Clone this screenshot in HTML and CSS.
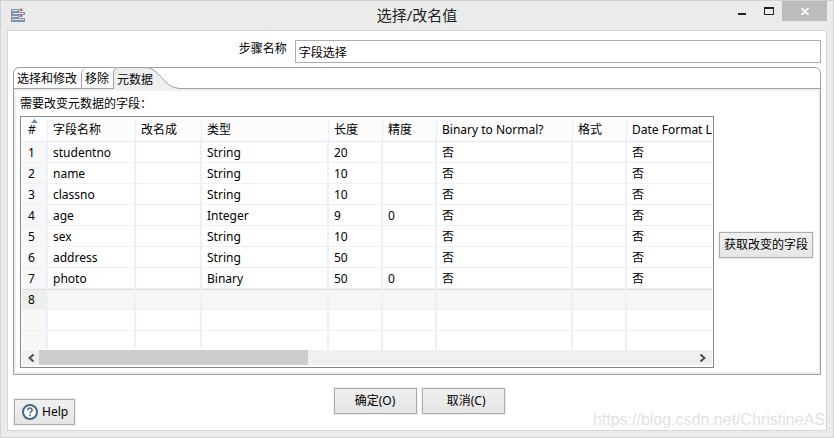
FILE: index.html
```html
<!DOCTYPE html>
<html lang="zh-CN">
<head>
  <meta charset="UTF-8" />
  <meta name="viewport" content="width=device-width, initial-scale=1" />
  <title>选择/改名值</title>
  <link rel="stylesheet" href="styles.css">
</head>
<body>
  <div class="window">
    <header class="title-bar">
      <svg class="app-icon" width="14" height="14" viewBox="0 0 14 14" shape-rendering="crispEdges" aria-hidden="true">
        <path fill="#7b96a8" d="M0 1h8v4H0zM0 4h14v3H0zM0 7h8v3H0zM0 10h14v4H0z"/>
        <path fill="#d9e2e8" d="M1 2h6v1H1zM2 5h11v1H2zM1 8h6v1H1zM1 11h12v1H1z"/>
        <path fill="#e8b6bf" d="M8 0h4v3H8zM8 7h4v2H8z"/>
        <path fill="#e9455c" d="M9 1h2v2H9zM9 7h2v2H9z"/>
      </svg>
      <h1 class="title">选择/改名值</h1>
      <div class="window-controls">
        <button class="control" type="button" aria-label="最小化">
          <svg width="8" height="10" viewBox="0 0 8 10"><path fill="#222" d="M0 7h8v2H0z"/></svg>
        </button>
        <button class="control" type="button" aria-label="最大化">
          <svg width="10" height="8" viewBox="0 0 10 8"><path fill="#222" fill-rule="evenodd" d="M0 0h10v8H0zM1 2v5h8V2z"/></svg>
        </button>
        <button class="control close" type="button" aria-label="关闭">
          <svg width="8" height="7" viewBox="0 0 8 7"><path stroke="#fff" stroke-width="1.6" d="M0.5 0 7.5 7M7.5 0 0.5 7"/></svg>
        </button>
      </div>
    </header>

    <main class="client">
      <div class="step-row">
        <label for="step-name">步骤名称</label>
        <input class="step-input" id="step-name" type="text" value="字段选择">
      </div>

      <section class="folder">
        <div class="tabs" role="tablist">
          <button class="tab" type="button" role="tab">选择和修改</button>
          <button class="tab" type="button" role="tab">移除</button>
          <button class="tab active" type="button" role="tab" aria-selected="true">
            <svg class="tab-shape" width="68" height="22" viewBox="0 0 68 22" aria-hidden="true">
              <path fill="#efefef" d="M0 22V6Q0 0 5 0H32C48 0 49 21 67 21V22z"/>
              <path fill="none" stroke="#a0a0a0" d="M0.5 22V6Q0.5 2 5 0.5H32C48 0.5 49 21 67 21.5"/>
            </svg>
            <span class="tab-text">元数据</span>
          </button>
        </div>

        <div class="panel" role="tabpanel">
          <p class="caption">需要改变元数据的字段：</p>
          <div class="panel-body">
            <div class="grid-box">
              <div class="grid-view">
                <table class="grid">
                  <colgroup>
                    <col class="col-index"><col class="col-name"><col class="col-rename"><col class="col-type">
                    <col class="col-short"><col class="col-short"><col class="col-binary"><col class="col-short"><col>
                  </colgroup>
                  <thead>
                    <tr>
                      <th class="sorted">#<svg class="sort-mark" width="7" height="4" viewBox="0 0 7 4" aria-hidden="true"><path fill="#5b9ab8" d="M0 4 3.5 0 7 4z"/></svg></th>
                      <th>字段名称</th><th>改名成</th><th>类型</th><th>长度</th><th>精度</th>
                      <th>Binary to Normal?</th><th>格式</th><th>Date Format L</th>
                    </tr>
                  </thead>
                  <tbody>
                    <tr><td>1</td><td>studentno</td><td></td><td>String</td><td>20</td><td></td><td>否</td><td></td><td>否</td></tr>
                    <tr><td>2</td><td>name</td><td></td><td>String</td><td>10</td><td></td><td>否</td><td></td><td>否</td></tr>
                    <tr><td>3</td><td>classno</td><td></td><td>String</td><td>10</td><td></td><td>否</td><td></td><td>否</td></tr>
                    <tr><td>4</td><td>age</td><td></td><td>Integer</td><td>9</td><td>0</td><td>否</td><td></td><td>否</td></tr>
                    <tr><td>5</td><td>sex</td><td></td><td>String</td><td>10</td><td></td><td>否</td><td></td><td>否</td></tr>
                    <tr><td>6</td><td>address</td><td></td><td>String</td><td>50</td><td></td><td>否</td><td></td><td>否</td></tr>
                    <tr><td>7</td><td>photo</td><td></td><td>Binary</td><td>50</td><td>0</td><td>否</td><td></td><td>否</td></tr>
                    <tr class="current"><td>8</td><td></td><td></td><td></td><td></td><td></td><td></td><td></td><td></td></tr>
                    <tr><td></td><td></td><td></td><td></td><td></td><td></td><td></td><td></td><td></td></tr>
                    <tr><td></td><td></td><td></td><td></td><td></td><td></td><td></td><td></td><td></td></tr>
                  </tbody>
                </table>
              </div>
              <div class="scrollbar">
                <button class="scroll-arrow" type="button" aria-label="向左滚动">
                  <svg width="6" height="8" viewBox="0 0 6 8"><path fill="none" stroke="#505050" stroke-width="2" d="M5.5 0.5 1.5 4 5.5 7.5"/></svg>
                </button>
                <div class="scroll-track"><div class="scroll-thumb"></div></div>
                <button class="scroll-arrow" type="button" aria-label="向右滚动">
                  <svg width="6" height="8" viewBox="0 0 6 8"><path fill="none" stroke="#505050" stroke-width="2" d="M0.5 0.5 4.5 4 0.5 7.5"/></svg>
                </button>
              </div>
            </div>
            <button class="btn btn-fetch" type="button">获取改变的字段</button>
          </div>
        </div>
      </section>

      <footer class="footer">
        <button class="btn btn-help" type="button">
          <svg width="16" height="16" viewBox="0 0 16 16" aria-hidden="true">
            <circle cx="8" cy="8" r="7" fill="#fff" stroke="#44698a" stroke-width="2"/>
            <path fill="none" stroke="#44698a" stroke-width="1.5" d="M5.8 6.2C5.8 3.4 10.2 3.4 10.2 6.1 10.2 7.8 8 7.7 8 9.6"/>
            <path fill="#44698a" d="M7.2 10.6h1.6v1.6H7.2z"/>
          </svg>
          Help
        </button>
        <div class="actions">
          <button class="btn btn-action" type="button">确定(O)</button>
          <button class="btn btn-action" type="button">&nbsp;&nbsp;取消(C)</button>
        </div>
        <span class="watermark">https://blog.csdn.net/ChristineAS</span>
      </footer>
    </main>
  </div>
</body>
</html>
```

FILE: styles.css
```css
* {
  box-sizing: border-box;
}

body {
  margin: 0;
  font-family: "Noto Sans", "Noto Sans CJK SC", sans-serif;
  font-size: 12px;
  line-height: 16px;
  color: #000;
}

button,
input {
  font: inherit;
  color: inherit;
  margin: 0;
  padding: 0;
}

svg {
  display: block;
}

.window {
  display: flex;
  flex-direction: column;
  min-height: 100vh;
  padding: 0 6px 6px;
  background: #ebebeb;
  border: 1px solid #d1d1d1;
}

/* title bar */
.title-bar {
  display: grid;
  grid-template-columns: 1fr auto 1fr;
  height: 29px;
}

.app-icon {
  margin: 7px 0 0 4px;
}

.title {
  margin: 0;
  font-size: 15px;
  line-height: 28px;
  font-weight: normal;
  color: #222;
}

.window-controls {
  display: flex;
  justify-content: flex-end;
  align-items: flex-start;
}

.control {
  display: flex;
  align-items: center;
  justify-content: center;
  width: 27px;
  height: 20px;
  border: 0;
  background: none;
}

.control.close {
  width: 45px;
  background: #bcbcbc;
}

/* client area */
.client {
  flex: 1;
  display: flex;
  flex-direction: column;
  padding: 9px 5px 5px;
  background: #fff;
  border: 1px solid #d6d6d6;
}

.step-row {
  display: grid;
  grid-template-columns: 34% 1fr;
  gap: 7px;
}

.step-row label {
  padding: 1px 1px 0 0;
  text-align: right;
}

.step-input {
  height: 23px;
  min-width: 0;
  padding: 0 3px;
  border: 1px solid #abadb3;
  background: #fff;
  outline: none;
}

/* tab folder */
.folder {
  flex: 1;
  display: flex;
  flex-direction: column;
  margin-top: 4px;
  border: 1px solid #a0a0a0;
  border-radius: 6px 6px 0 0;
}

.tabs {
  display: flex;
  height: 21px;
  border-bottom: 1px solid #a0a0a0;
}

.tab {
  position: relative;
  height: 20px;
  padding: 2px 4px 0 3px;
  border: 0;
  background: none;
}

.tab + .tab {
  border-left: 1px solid #a0a0a0;
  border-radius: 6px 0 0 0;
}

.tab + .tab.active {
  height: 21px;
  padding-left: 4px;
  border: 0;
}

.tab-shape {
  position: absolute;
  left: 0;
  top: -1px;
}

.tab-text {
  position: relative;
}

.panel {
  flex: 1;
  display: flex;
  flex-direction: column;
  padding: 5px 4px 4px;
  border: 2px solid #f0f0f0;
}

.caption {
  margin: 0 0 4px;
}

.panel-body {
  flex: 1;
  display: grid;
  grid-template-columns: 1fr auto;
  align-items: center;
  gap: 5px;
}

/* field grid */
.grid-box {
  min-width: 0;
  height: 100%;
  padding: 1px;
  border: 1px solid #828790;
}

.grid-view {
  height: 231px;
  overflow: hidden;
}

.grid {
  width: 100%;
  table-layout: fixed;
  border-collapse: separate;
  border-spacing: 0;
}

.col-index { width: 26px; }
.col-name { width: 88px; }
.col-rename { width: 66px; }
.col-type { width: 127px; }
.col-short { width: 54px; }
.col-binary { width: 136px; }

.grid th,
.grid td {
  height: 21px;
  padding: 2px 0 0 5px;
  border-right: 2px solid #ebf0f9;
  border-bottom: 1px solid #f0f0f0;
  font-weight: normal;
  text-align: left;
  white-space: nowrap;
  overflow: hidden;
}

.grid th {
  height: 24px;
  padding-top: 0;
  border-right: 1px solid #e5effb;
  border-bottom-color: #e5eaf5;
  background: #fcfcfc;
}

.grid th:last-child,
.grid td:last-child {
  border-right: 0;
}

.grid th:first-child,
.grid td:first-child {
  padding-left: 6px;
}

.grid td:first-child {
  background: #f7f7f7;
}

.grid .sorted {
  position: relative;
}

.sort-mark {
  position: absolute;
  left: 9px;
  top: 1px;
}

.grid .current td {
  background: #f6f6f6;
  box-shadow: inset 0 1px #dedede;
}

.grid .current td:first-child {
  background: #eee;
}

/* scrollbar */
.scrollbar {
  display: flex;
  height: 15px;
  margin-top: 1px;
  background: #f0f0f0;
}

.scroll-arrow {
  display: flex;
  align-items: center;
  justify-content: center;
  width: 17px;
  border: 0;
  background: none;
}

.scroll-track {
  flex: 1;
}

.scroll-thumb {
  width: 41%;
  height: 100%;
  background: #cdcdcd;
}

/* buttons */
.btn {
  height: 26px;
  border: 1px solid #acacac;
  background: linear-gradient(#f0f0f0, #e5e5e5);
  box-shadow: 0 0 0 1px #f0f0f0;
}

.btn-fetch {
  padding: 0 4px;
  margin: 6px 1px 0 0;
}

.btn-action {
  width: 83px;
}

.btn-help {
  display: flex;
  align-items: center;
  gap: 4px;
  justify-self: start;
  align-self: end;
  padding: 0 6px 0 7px;
  margin-left: 1px;
}

.footer {
  display: grid;
  grid-template-columns: 1fr auto 1fr;
  height: 50px;
}

.actions {
  display: flex;
  align-items: flex-start;
  gap: 5px;
  padding: 13px 0 0 4px;
}

.watermark {
  justify-self: end;
  align-self: end;
  margin: 0 -4px -5px 0;
  font: 16px/20px "Liberation Sans", sans-serif;
  color: #e2e2e2;
  white-space: nowrap;
}
```
